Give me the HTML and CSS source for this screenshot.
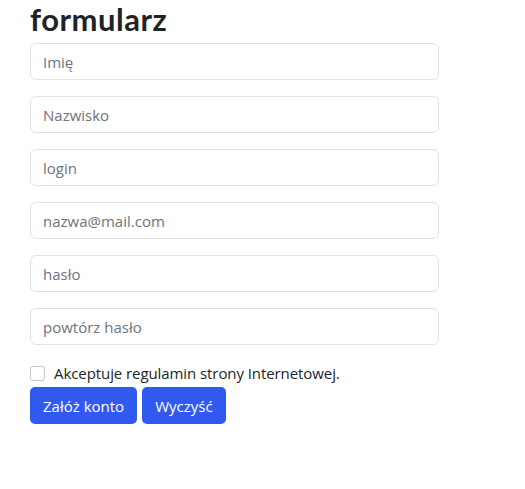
FILE: index.html
```html
<!DOCTYPE html>
<html lang="pl">
<head>
<meta charset="utf-8">
<title>formularz</title>
<link rel="stylesheet" href="styles.css">
</head>
<body>
<main class="page">
  <h1 class="title">formularz</h1>
  <form class="form">
    <input class="field" type="text" placeholder="Imię">
    <input class="field" type="text" placeholder="Nazwisko">
    <input class="field" type="text" placeholder="login">
    <input class="field" type="email" placeholder="nazwa@mail.com">
    <input class="field" type="password" placeholder="hasło">
    <input class="field" type="password" placeholder="powtórz hasło">
    <label class="check">
      <span class="box"></span>
      <span class="check-text">Akceptuje regulamin strony Internetowej.</span>
    </label>
    <div class="actions">
      <button class="btn" type="button">Załóż konto</button>
      <button class="btn" type="button">Wyczyść</button>
    </div>
  </form>
</main>
</body>
</html>
```
FILE: styles.css
```css
* { box-sizing: border-box; }
html, body { margin: 0; background: #fff; }
body {
  font-family: "Open Sans", "Noto Sans", sans-serif;
  color: #212529;
}
.page {
  width: 409px;
  margin-left: 30px;
}
.title {
  margin: 0;
  height: 43px;
  font-family: Lato, "Open Sans", sans-serif;
  font-size: 31px;
  font-weight: 700;
  line-height: 38px;
  letter-spacing: 0.5px;
  color: #1f2326;
}
.form {
  display: flex;
  flex-direction: column;
}
.field {
  height: 37px;
  margin-bottom: 16px;
  padding: 0 12px;
  border: 1px solid #dee2e6;
  border-radius: 6px;
  font-family: inherit;
  font-size: 15px;
  color: #212529;
  background: #fff;
}
.field::placeholder { color: #6c757d; }
.check {
  display: flex;
  align-items: center;
  gap: 9px;
  margin-top: 1px;
  height: 22px;
  font-size: 15px;
  color: #212529;
}
.check-text { letter-spacing: -0.08px; }
.box {
  width: 15px;
  height: 15px;
  border: 1px solid #c4c8cc;
  border-radius: 3px;
  flex: none;
}
.actions {
  display: flex;
  gap: 5px;
  margin-top: 3px;
}
.btn {
  height: 37px;
  padding: 0 13px;
  border: none;
  border-radius: 5px;
  background: #3159f0;
  color: #fff;
  font-family: inherit;
  font-size: 15px;
}
```
